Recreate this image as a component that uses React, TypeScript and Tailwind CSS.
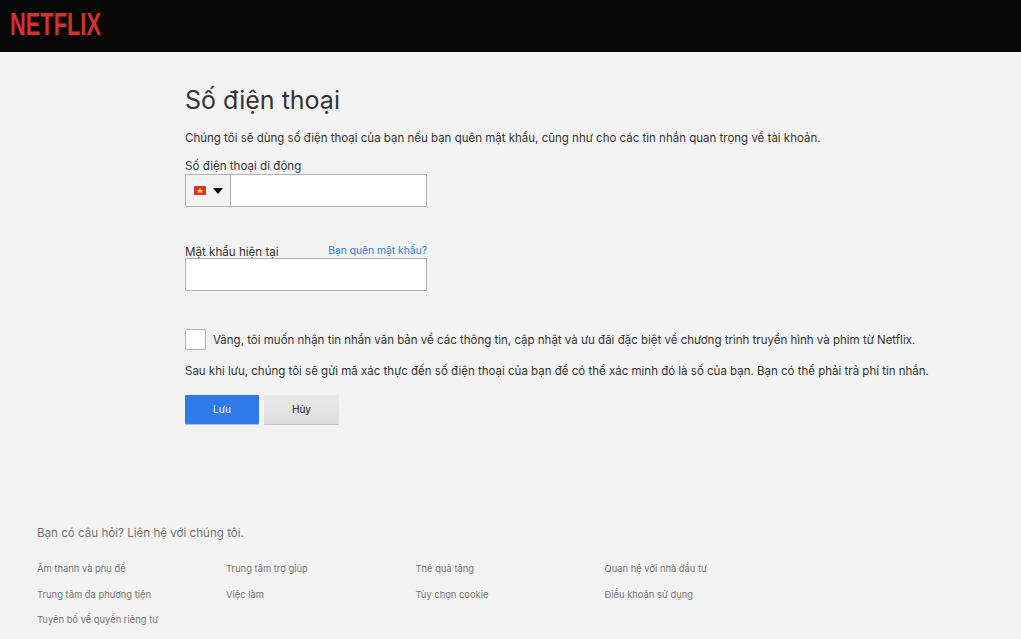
import React from "react";

const font = { fontFamily: "Inter, 'Noto Sans', sans-serif" };

function Flag() {
  return (
    <svg width="12" height="9" viewBox="0 0 12 9" className="block">
      <rect width="12" height="9" rx="1" fill="#d8352a" />
      <polygon points="6,1.6 6.9,4 9.2,4 7.4,5.4 8,7.6 6,6.3 4,7.6 4.6,5.4 2.8,4 5.1,4" fill="#f7d64a" />
    </svg>
  );
}

const cols = [
  { w: "w-[189px]", items: ["Âm thanh và phụ đề", "Trung tâm đa phương tiện", "Tuyên bố về quyền riêng tư"] },
  { w: "w-[189.5px]", items: ["Trung tâm trợ giúp", "Việc làm"] },
  { w: "w-[189px]", items: ["Thẻ quà tặng", "Tùy chọn cookie"] },
  { w: "w-[189px]", items: ["Quan hệ với nhà đầu tư", "Điều khoản sử dụng"] },
];

export default function App() {
  return (
    <div className="w-[1021px] h-[639px] overflow-hidden bg-[#f3f3f3] text-[#333]" style={font}>
      <header className="h-[52px] bg-[#070707] pl-[10px] pt-[6px]">
        <svg width="140" height="40" viewBox="0 0 140 40" className="block">
          <text
            x="0"
            y="28.5"
            textLength="91"
            lengthAdjust="spacingAndGlyphs"
            fontFamily="'Liberation Sans', sans-serif"
            fontWeight="700"
            fontSize="31"
            fill="#d3322a"
          >
            NETFLIX
          </text>
        </svg>
      </header>

      <main className="pl-[185px] pt-[30px]">
        <h1 className="text-[25px] leading-[36px] font-normal text-[#333]">Số điện thoại</h1>
        <p className="mt-[11px] text-[11.5px] leading-[18px] text-[#333]">
          Chúng tôi sẽ dùng số điện thoại của bạn nếu bạn quên mật khẩu, cũng như cho các tin nhắn quan trọng về tài khoản.
        </p>
        <label className="mt-[10px] mb-[-1px] block text-[11.6px] leading-[18px]">Số điện thoại di động</label>
        <div className="flex h-[33px] w-[242px] border border-[#b3b3b3] bg-white">
          <div className="flex w-[45px] items-center border-r border-[#b3b3b3] pl-[8px] bg-[#f3f3f3]">
            <Flag />
            <span className="ml-[7px] h-0 w-0 border-x-[5px] border-t-[6px] border-x-transparent border-t-black" />
          </div>
        </div>

        <div className="mt-[35px] mb-[-3px] flex w-[242px] items-end justify-between">
          <label className="text-[11.6px] leading-[18px]">Mật khẩu hiện tại</label>
          <a className="mb-[3px] text-[10.3px] leading-[16px] text-[#2f7fd6]">Bạn quên mật khẩu?</a>
        </div>
        <div className="h-[33px] w-[242px] border border-[#b3b3b3] bg-white" />

        <div className="mt-[38px] flex items-center">
          <div className="h-[21px] w-[21px] border border-[#b3b3b3] bg-white" />
          <span className="ml-[7px] text-[11.5px] leading-[18px]">
            Vâng, tôi muốn nhận tin nhắn văn bản về các thông tin, cập nhật và ưu đãi đặc biệt về chương trình truyền hình và phim từ Netflix.
          </span>
        </div>
        <p className="mt-[12px] text-[11.5px] leading-[18px]">
          Sau khi lưu, chúng tôi sẽ gửi mã xác thực đến số điện thoại của bạn để có thể xác minh đó là số của bạn. Bạn có thể phải trả phí tin nhắn.
        </p>

        <div className="mt-[15px] flex gap-[5px]">
          <button className="h-[29px] w-[74px] rounded-[1px] bg-[#2f7ae8] text-[10px] text-white shadow-[0_1px_0_rgba(0,0,0,0.2)]">
            Lưu
          </button>
          <button className="h-[29px] w-[75px] rounded-[1px] bg-gradient-to-b from-[#e9e9e9] to-[#dedede] text-[10px] text-[#222] shadow-[0_1px_0_rgba(0,0,0,0.2)]">
            Hủy
          </button>
        </div>
      </main>

      <footer className="pl-[37px] pt-[100px] text-[#737373]">
        <p className="text-[11.6px] leading-[18px]">Bạn có câu hỏi? Liên hệ với chúng tôi.</p>
        <div className="mt-[20px] flex">
          {cols.map((c, i) => (
            <ul key={i} className={`${c.w} flex flex-col gap-[11.5px]`}>
              {c.items.map((t) => (
                <li key={t} className="text-[9.4px] leading-[14px] text-[#757575]">{t}</li>
              ))}
            </ul>
          ))}
        </div>
      </footer>
    </div>
  );
}
